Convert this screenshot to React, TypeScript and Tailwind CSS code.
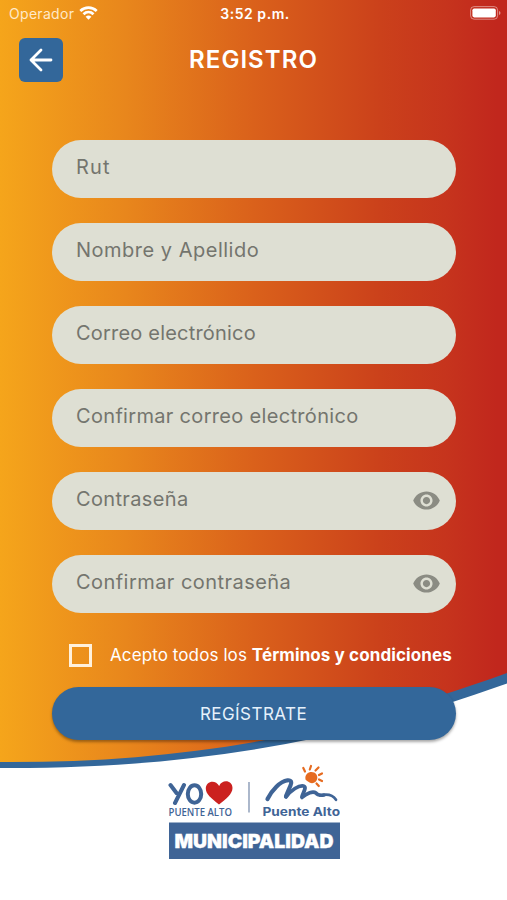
import React from 'react';

const fields = [
  { label: 'Rut', tracking: 'tracking-[1.2px]' },
  { label: 'Nombre y Apellido', tracking: 'tracking-[0.5px]' },
  { label: 'Correo electrónico', tracking: 'tracking-[0.2px]' },
  { label: 'Confirmar correo electrónico', tracking: 'tracking-[0.32px]' },
  { label: 'Contraseña', tracking: 'tracking-[0.35px]', password: true },
  { label: 'Confirmar contraseña', tracking: 'tracking-[0.45px]', password: true },
];

function Background() {
  return (
    <svg className="absolute inset-0 h-full w-full" viewBox="0 0 507 900" aria-hidden="true">
      <defs>
        <linearGradient id="sunset" x1="0" y1="0" x2="1" y2="0">
          <stop offset="0" stopColor="#f5a51b" />
          <stop offset="0.25" stopColor="#e8861c" />
          <stop offset="0.5" stopColor="#da611b" />
          <stop offset="0.75" stopColor="#cb411b" />
          <stop offset="0.88" stopColor="#c6341d" />
          <stop offset="0.98" stopColor="#c1271d" />
          <stop offset="1" stopColor="#c1271d" />
        </linearGradient>
      </defs>
      <path d="M0 0H507V683.5C340 744 180 769 0 768Z" fill="#33679a" />
      <path d="M0 0H507V673C330 737 180 763 0 762Z" fill="url(#sunset)" />
    </svg>
  );
}

function StatusBar() {
  return (
    <div className="grid h-[26px] grid-cols-3 items-center pl-[9px] pr-[6px] text-white">
      <div className="flex items-center gap-[5px]">
        <span className="text-[14px] tracking-[0.3px] text-[#ffe9c9]">Operador</span>
        <svg width="19" height="14" viewBox="0 0 19 14" fill="none" stroke="currentColor" strokeWidth="2.7">
          <path d="M1.3 5C6 .5 13 .5 17.7 5" />
          <path d="M4.5 8.2C7.4 5.4 11.6 5.4 14.5 8.2" />
          <path d="M9.5 13.7 6.6 10.8Q9.5 8.3 12.4 10.8Z" fill="currentColor" stroke="none" />
        </svg>
      </div>
      <span className="text-center text-[14px] font-semibold tracking-[0.55px]">3:52 p.m.</span>
      <svg className="justify-self-end" width="31" height="14" viewBox="0 0 31 14">
        <rect x="0.6" y="0.6" width="27" height="12.6" rx="3.5" fill="none" stroke="#fff" strokeOpacity="0.45" />
        <rect x="2.4" y="2.4" width="23.4" height="9" rx="1.8" fill="#fff" />
        <path d="M29 5v4q1.5-.6 1.5-2T29 5Z" fill="#fff" fillOpacity="0.5" />
      </svg>
    </div>
  );
}

function EyeIcon() {
  return (
    <svg width="29" height="29" viewBox="0 0 24 24" fill="#8b8c83">
      <path d="M12 4.5C7 4.5 2.73 7.61 1 12c1.73 4.39 6 7.5 11 7.5s9.27-3.11 11-7.5c-1.73-4.39-6-7.5-11-7.5zM12 17c-2.76 0-5-2.24-5-5s2.24-5 5-5 5 2.24 5 5-2.24 5-5 5zm0-8c-1.66 0-3 1.34-3 3s1.34 3 3 3 3-1.34 3-3-1.34-3-3-3z" />
    </svg>
  );
}

function Logo() {
  return (
    <svg width="172" height="98" viewBox="168 762 172 98">
      <g fill="none" stroke="#3f6496" strokeWidth="4" strokeLinecap="round" strokeLinejoin="round">
        <path d="M170.5 785 176.5 793M184 785 175 803" />
        <ellipse cx="194.5" cy="794" rx="6.7" ry="8.7" />
      </g>
      <path
        d="M219 804.5C211 798 205.8 794 205.8 788.5C205.8 781 215.5 779 219.2 786C222 779 232.5 780 232.5 788C232.500 794 226 799 219 804.5Z"
        fill="#cb211f"
      />
      <text x="168.5" y="815.8" fontSize="9.8" fontWeight="600" fill="#3f6496" textLength="63.5" lengthAdjust="spacingAndGlyphs" fontFamily="Open Sans, sans-serif">
        PUENTE ALTO
      </text>
      <path d="M249 782V812.5" stroke="#7f91af" strokeWidth="1.3" />
      {/* hills */}
      <g fill="none" stroke="#3f6496" strokeLinecap="round" strokeLinejoin="round">
        <path d="M267.5 799C272 790 280 781.5 287.5 780.3C291.500 780 292 782.500 290.500 785.500L286 796" strokeWidth="4.2" />
        <path d="M286 797C291 790 299 785 303.500 786C307 787 303.500 792 302 796.500" strokeWidth="3.8" />
        <path d="M302 797.500C307 793 313 790.800 316 793C317.500 795.500 320 795.500 324 795" strokeWidth="3.6" />
        <path d="M320 795.500C328 793.500 333.500 796 336 799.800" strokeWidth="2.7" />
      </g>
      <path d="M305.500 779.500C304.500 774.500 308 772 311.500 772C315.500 772 317.500 775 317.300 778C317 782 313 784.500 309.500 782.500C307 781 306.500 780.500 305.500 779.500Z" fill="#e66b20" />
      <path
        d="M305 771.500 303.300 768M309.800 769.500 311 766M315.500 770.500 318.500 767.500M319 775 322 773.500M319 779.500 322 781M316.500 783.500 318.800 786"
        stroke="#e66b20"
        strokeWidth="2.200"
        strokeLinecap="round"
      />
      <text x="262.5" y="815.8" fontSize="12" fontWeight="700" fill="#3f6496" textLength="77.5" lengthAdjust="spacingAndGlyphs" fontFamily="Inter, sans-serif">
        Puente Alto
      </text>
      <rect x="169" y="822.5" width="171" height="36.5" fill="#3f6496" />
      <text x="174.5" y="848" fontSize="19" fontWeight="900" fill="#fff" stroke="#fff" strokeWidth="0.3" textLength="159" lengthAdjust="spacingAndGlyphs" fontFamily="Inter, sans-serif">
        MUNICIPALIDAD
      </text>
    </svg>
  );
}

export default function App() {
  return (
    <div className="relative h-[900px] w-full max-w-[507px] overflow-hidden bg-white font-['Inter',sans-serif]">
      <Background />
      <div className="relative">
        <StatusBar />

        <header className="mt-3 grid h-11 grid-cols-[44px_1fr_44px] items-center px-[19px]">
          <button className="flex h-11 w-11 items-center justify-center rounded-md bg-[#33679a]" aria-label="Volver">
            <svg width="24" height="24" viewBox="0 0 24 24" fill="none" stroke="#fff" strokeWidth="2.8" strokeLinecap="round" strokeLinejoin="round">
              <path d="M22 12H2M12 2 2 12l10 10" />
            </svg>
          </button>
          <h1 className="text-center text-[24px] font-semibold tracking-[1.05px] text-white">REGISTRO</h1>
        </header>

        <form className="mt-[57.5px] flex flex-col px-[51.5px]">
          <div className="flex flex-col gap-[24.5px]">
            {fields.map((field) => (
              <div key={field.label} className="flex h-[58.5px] items-center justify-between rounded-full bg-[#dedfd3] pl-[24.5px] pr-[15px]">
                <span className={`-mt-[3px] text-[20px] font-normal text-[#74756e] ${field.tracking}`}>{field.label}</span>
                {field.password && <EyeIcon />}
              </div>
            ))}
          </div>

          <label className="mt-[30px] flex h-6 items-center pl-[17.5px] text-[17px] text-white">
            <span className="h-[23px] w-[23px] border-3 border-[#fff1dc]" />
            <span className="ml-[18px] whitespace-nowrap pt-[2px] tracking-[0.1px]">
              Acepto todos los <b className="font-bold">Términos y condiciones</b>
            </span>
          </label>

          <button type="button" className="mt-[20px] h-[53px] rounded-full bg-[#33679a] pt-[2px] text-[17px] tracking-[0.45px] text-[#e6f1fb] shadow-[0_2px_3px_rgba(0,0,0,0.35)]">
            REGÍSTRATE
          </button>
        </form>

        <div className="mt-[22px] flex justify-center">
          <Logo />
        </div>
      </div>
    </div>
  );
}
